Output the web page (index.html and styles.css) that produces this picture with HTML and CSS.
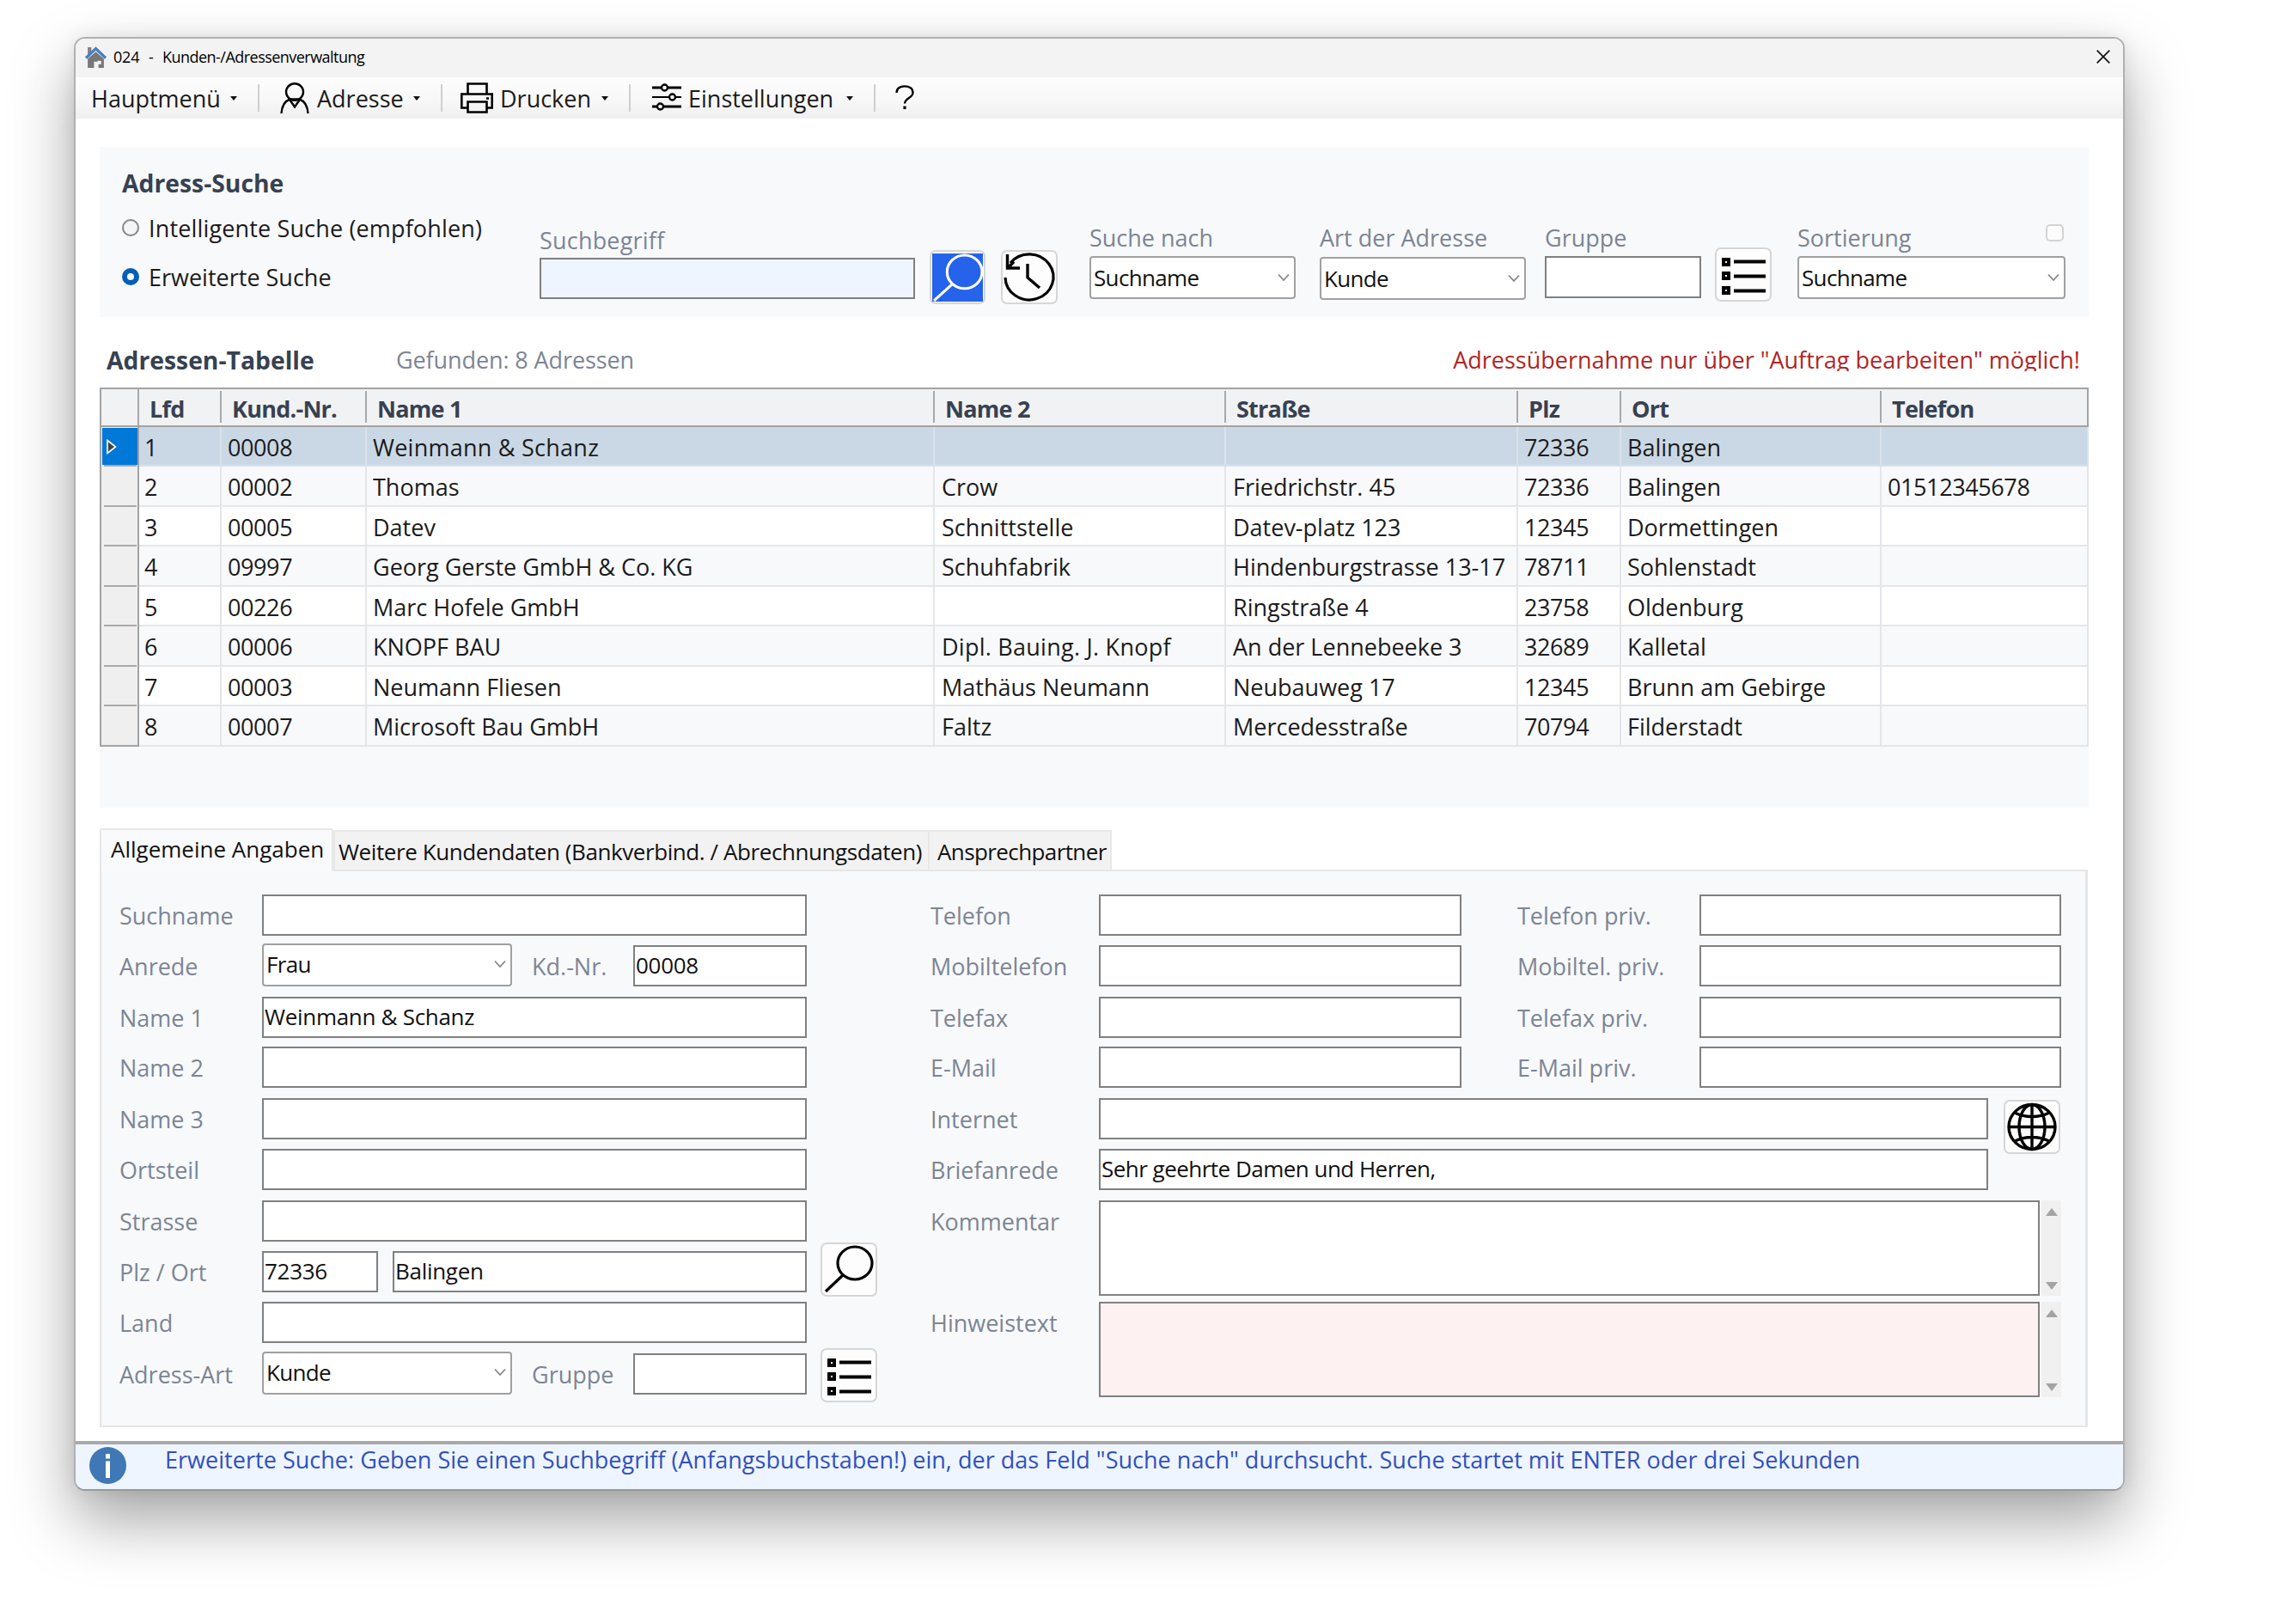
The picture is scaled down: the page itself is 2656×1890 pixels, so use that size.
FILE: index.html
```html
<!DOCTYPE html>
<html lang="de">
<head>
<meta charset="utf-8">
<title>Kunden-/Adressenverwaltung</title>
<link rel="stylesheet" href="styles.css">
</head>
<body>
<svg class="defs" width="0" height="0">
  <symbol id="i-list" viewBox="0 0 66 63">
    <g fill="none" stroke="#000" stroke-width="4"><path d="M10 14h6v6h-6zM10 30h6v6h-6zM10 47h6v6h-6z"/><path d="M22 16.500h37M22 33.500h37M22 50.500h37"/></g>
  </symbol>
  <symbol id="i-chev" viewBox="0 0 14 10"><path d="M1 1.500l6 6.500 6-6.500" fill="none" stroke="#858585" stroke-width="1.800"/></symbol>
</svg>
<div class="window">
  <header class="titlebar">
    <svg class="home" viewBox="0 0 24 24"><path d="M3 1h4v5l-4 4z" fill="#808080"/><path d="M12 6l9 8v10h-6v-7h-5v7H3V14z" fill="#777"/><path d="M14 16h4v4h-4z" fill="#f3f3f3"/><path d="M1 13L12 2.500 23 13" fill="none" stroke="#4581c2" stroke-width="3.200"/></svg>
    <span class="t-no">024</span><span class="t-dash">-</span><span class="t-name">Kunden-/Adressenverwaltung</span>
    <svg class="close" viewBox="0 0 16 16"><path d="M.7.700l14.600 14.600M15.300.700L.7 15.300" stroke="#111" stroke-width="1.700"/></svg>
  </header>
  <nav class="toolbar">
    <span class="m m1">Hauptmenü</span><i class="arr"></i><i class="sep"></i>
    <svg class="ic-user" viewBox="0 0 34 36" fill="none" stroke="#000" stroke-width="2.400"><ellipse cx="17" cy="11" rx="10" ry="9.800"/><path d="M1.500 36C2 27 6 21.500 11.500 19.500h11C28 21.500 32 27 32.500 36M11.500 20.500l5.500 8 5.500-8"/></svg>
    <span class="m m2">Adresse</span><i class="arr"></i><i class="sep"></i>
    <svg class="ic-print" viewBox="0 0 38 36" fill="none" stroke="#000" stroke-width="2.600"><path d="M8.500 13V1.500h22V13M8.500 29.500H1.300V13.500h35.400v16h-6.200"/><path d="M8.500 22.500h22v12h-22z"/><path d="M30 18.500h3"/></svg>
    <span class="m m3">Drucken</span><i class="arr"></i><i class="sep"></i>
    <svg class="ic-set" viewBox="0 0 34 32" fill="none" stroke="#000" stroke-width="3"><path d="M0 5h11M18 5h16M0 27h6M13 27h21"/><path d="M0 16h20M27 16h7" stroke-width="2.200"/><g stroke-width="2.300"><circle cx="14.500" cy="5" r="3.500"/><circle cx="23.500" cy="16" r="3.500"/><circle cx="9.500" cy="27" r="3.500"/></g></svg>
    <span class="m m4">Einstellungen</span><i class="arr"></i><i class="sep"></i>
    <svg class="ic-help" viewBox="0 0 22 28" fill="none" stroke="#000" stroke-width="2.300"><path d="M1.500 9C1.500 4 5.500 1.300 11 1.300S20.500 4 20.500 9c0 6-9.500 6-9.500 12.500"/><path d="M11 24.500v3.500" stroke-width="3.200"/></svg>
  </nav>

  <main>
    <section class="search">
      <div class="modes">
        <h2>Adress-Suche</h2>
        <label class="radio r1"><i></i><span class="w-int">Intelligente Suche (empfohlen)</span></label>
        <label class="radio r2 on"><i></i><span>Erweiterte Suche</span></label>
      </div>
      <div class="f f-term"><span class="lb">Suchbegriff</span><div class="in"></div></div>
      <div class="btn b-go"><svg viewBox="0 0 58 55"><path fill="#2563eb" d="M0 0h58v55H0z"/><g fill="none" stroke="#fff" stroke-width="3"><ellipse cx="37" cy="21" rx="20" ry="19"/><path d="M23 35L2 54"/></g></svg></div>
      <div class="btn b-hist"><svg viewBox="0 0 66 63" fill="none" stroke="#000" stroke-width="3.200"><path d="M5 32a28 26.500 0 1 0 6-17"/><path d="M7.500 5v16H22M8 21l7-7.500M31 16v16l14 12" stroke-width="3.400"/></svg></div>
      <div class="f f-by"><span class="lb">Suche nach</span><div class="sel">Suchname<svg><use href="#i-chev"/></svg></div></div>
      <div class="f f-kind"><span class="lb">Art der Adresse</span><div class="sel">Kunde<svg><use href="#i-chev"/></svg></div></div>
      <div class="f f-grp"><span class="lb">Gruppe</span><div class="in"></div></div>
      <div class="btn b-list"><svg><use href="#i-list"/></svg></div>
      <div class="f f-sort"><span class="lb">Sortierung<i class="chk"></i></span><div class="sel">Suchname<svg><use href="#i-chev"/></svg></div></div>
    </section>

    <div class="tabhead"><h2>Adressen-Tabelle</h2><span class="found">Gefunden: 8 Adressen</span><span class="warn">Adressübernahme nur über "Auftrag bearbeiten" möglich!</span></div>

    <section class="grid">
      <div class="hr"><b></b><b>Lfd</b><b>Kund.-Nr.</b><b>Name 1</b><b>Name 2</b><b>Straße</b><b>Plz</b><b>Ort</b><b>Telefon</b></div>
      <div class="rows">
      <div class="r cur"><i><svg viewBox="0 0 12 18"><path d="M1 1.500l9.500 7.500L1 16.500z" fill="#444" stroke="#fff" stroke-width="1.600"/></svg></i><span>1</span><span>00008</span><span class="wide-text">Weinmann &amp; Schanz</span><span></span><span></span><span>72336</span><span>Balingen</span><span></span></div>
      <div class="r"><i></i><span>2</span><span>00002</span><span>Thomas</span><span>Crow</span><span>Friedrichstr. 45</span><span>72336</span><span>Balingen</span><span>01512345678</span></div>
      <div class="r"><i></i><span>3</span><span>00005</span><span>Datev</span><span>Schnittstelle</span><span>Datev-platz 123</span><span>12345</span><span>Dormettingen</span><span></span></div>
      <div class="r"><i></i><span>4</span><span>09997</span><span>Georg Gerste GmbH &amp; Co. KG</span><span>Schuhfabrik</span><span>Hindenburgstrasse 13-17</span><span>78711</span><span>Sohlenstadt</span><span></span></div>
      <div class="r"><i></i><span>5</span><span>00226</span><span>Marc Hofele GmbH</span><span></span><span>Ringstraße 4</span><span>23758</span><span>Oldenburg</span><span></span></div>
      <div class="r"><i></i><span>6</span><span>00006</span><span>KNOPF BAU</span><span class="wide-text">Dipl. Bauing. J. Knopf</span><span>An der Lennebeeke 3</span><span>32689</span><span>Kalletal</span><span></span></div>
      <div class="r"><i></i><span>7</span><span>00003</span><span>Neumann Fliesen</span><span>Mathäus Neumann</span><span>Neubauweg 17</span><span>12345</span><span>Brunn am Gebirge</span><span></span></div>
      <div class="r"><i></i><span>8</span><span>00007</span><span>Microsoft Bau GmbH</span><span>Faltz</span><span>Mercedesstraße</span><span>70794</span><span>Filderstadt</span><span></span></div>
      </div>
    </section>

    <div class="tabs"><div class="tab t1">Allgemeine Angaben</div><div class="tab t2"><span>Weitere Kundendaten (Bankverbind. / Abrechnungsdaten)</span></div><div class="tab t3"><span>Ansprechpartner</span></div></div>
    <section class="form">
      <div class="lb a r-1">Suchname</div><div class="in b r-1"></div>
      <div class="lb a r-2">Anrede</div>
      <div class="multi b r-2"><div class="sel">Frau<svg><use href="#i-chev"/></svg></div><span class="lb">Kd.-Nr.</span><div class="in short">00008</div></div>
      <div class="lb a r-3">Name 1</div><div class="in b r-3">Weinmann &amp; Schanz</div>
      <div class="lb a r-4">Name 2</div><div class="in b r-4"></div>
      <div class="lb a r-5">Name 3</div><div class="in b r-5"></div>
      <div class="lb a r-6">Ortsteil</div><div class="in b r-6"></div>
      <div class="lb a r-7">Strasse</div><div class="in b r-7"></div>
      <div class="lb a r-8">Plz / Ort</div>
      <div class="multi b r-8"><div class="in zip">72336</div><div class="in city">Balingen</div></div>
      <div class="btn c r-8 up"><svg viewBox="0 0 66 63" fill="none" stroke="#000" stroke-width="3.200"><ellipse cx="40" cy="24" rx="20" ry="19"/><path d="M26 38L6 57"/></svg></div>
      <div class="lb a r-9">Land</div><div class="in b r-9"></div>
      <div class="lb a r-10">Adress-Art</div>
      <div class="multi b r-10"><div class="sel">Kunde<svg><use href="#i-chev"/></svg></div><span class="lb">Gruppe</span><div class="in short"></div></div>
      <div class="btn c r-10 up6"><svg><use href="#i-list"/></svg></div>

      <div class="lb d r-1">Telefon</div><div class="in e r-1"></div><div class="lb g r-1">Telefon priv.</div><div class="in h r-1"></div>
      <div class="lb d r-2">Mobiltelefon</div><div class="in e r-2"></div><div class="lb g r-2">Mobiltel. priv.</div><div class="in h r-2"></div>
      <div class="lb d r-3">Telefax</div><div class="in e r-3"></div><div class="lb g r-3">Telefax priv.</div><div class="in h r-3"></div>
      <div class="lb d r-4">E-Mail</div><div class="in e r-4"></div><div class="lb g r-4">E-Mail priv.</div><div class="in h r-4"></div>
      <div class="lb d r-5">Internet</div><div class="in wide r-5"></div>
      <div class="btn web r-5"><svg viewBox="0 0 66 63" fill="none" stroke="#000" stroke-width="3.400"><ellipse cx="33" cy="31.500" rx="27" ry="26"/><ellipse cx="33" cy="31.500" rx="15" ry="26"/><path d="M33 5v53M6 31.500h54M13 15c12 6 28 6 40 0M13 48c12-6 28-6 40 0"/></svg></div>
      <div class="lb d r-6">Briefanrede</div><div class="in wide greet r-6">Sehr geehrte Damen und Herren,</div>
      <div class="lb d r-7">Kommentar</div><div class="area r-7"><div class="in"></div><div class="sb"><i></i><i></i></div></div>
      <div class="lb d r-9">Hinweistext</div><div class="area hint r-9"><div class="in"></div><div class="sb"><i></i><i></i></div></div>
    </section>
  </main>

  <footer class="status">
    <svg viewBox="0 0 43 43"><circle cx="21.500" cy="21.500" r="21.500" fill="#3f78b4"/><path d="M21.500 8v5.500M21.500 16.500v19.500" stroke="#fff" stroke-width="5"/></svg>
    <span>Erweiterte Suche: Geben Sie einen Suchbegriff (Anfangsbuchstaben!) ein, der das Feld "Suche nach" durchsucht. Suche startet mit ENTER oder drei Sekunden</span>
  </footer>
</div>
</body>
</html>
```
FILE: styles.css
```css
* { box-sizing: border-box; }
html { background: #fff; }
body { margin: 0; min-height: 1890px; display: flow-root; font: 27px/48px "Open Sans", "Noto Sans", sans-serif; color: #1b1b1b; white-space: nowrap; }
.defs { display: block; height: 0; }
svg { display: block; flex: none; }
i { font-style: normal; }
h2 { margin: 0; font-size: 28.3px; font-weight: 700; color: #374151; }

.window { width: 2387px; height: 1692px; margin: 43px 0 0 86px; border: 2px solid #b0b0b0; border-bottom-color: #999; border-radius: 13px; background: #fff; overflow: hidden; display: flex; flex-direction: column;
  box-shadow: 0 34px 72px rgba(0,0,0,.36), 0 0 20px rgba(0,0,0,.08); }

.titlebar { height: 45px; background: #f3f3f3; display: flex; align-items: center; font-size: 18px; letter-spacing: -.53px; line-height: 42px; color: #000; padding: 0 15px 3px 11px; }
.home { width: 25px; height: 25px; margin-right: 8px; }
.t-no { width: 41px; letter-spacing: -.2px; }
.t-dash { width: 16px; }
.close { width: 16px; height: 16px; margin-left: auto; }

.toolbar { height: 48px; background: linear-gradient(#fdfdfd, #f7f7f7 60%, #efefef); display: flex; align-items: center; padding-left: 18px; flex: none; }
.arr { border: 4px solid transparent; border-top: 5px solid #111; border-bottom: 0; }
.sep { width: 2px; height: 32px; background: #cfcfcf; }
.m { padding-top: 1px; }
.m1 { width: 162px; } .m2 { width: 112px; } .m3 { width: 118px; } .m4 { width: 184px; }
.arr + .sep { margin-left: 24px; }
.ic-user { width: 34px; height: 36px; margin: 0 9px 0 24px; }
.ic-print { width: 38px; height: 36px; margin: 0 8px 0 21px; }
.ic-set { width: 34px; height: 32px; margin: -3px 8px 0 25px; }
.ic-help { width: 22px; height: 28px; margin: -2px 0 0 23px; }

main { padding: 33px 40px 0 28px; flex: 1; }
.lb { color: #7c8594; }
.in, .sel { height: 48px; border: 2px solid #808080; background: #fff; font-size: 26px; letter-spacing: -.3px; line-height: 42px; padding-left: 1px; color: #111; }
.sel { height: 50px; border-color: #a0a0a0; border-radius: 4px; padding: 0 5px 0 3px; line-height: 45px; letter-spacing: -.65px; display: flex; justify-content: space-between; align-items: center; }
.sel svg { width: 14px; height: 10px; }
.btn { width: 66px; height: 63px; border: 2px solid #d6d6d6; border-radius: 7px; background: #fdfdfd; display: flex; align-items: center; justify-content: center; }
.btn svg { width: 66px; height: 63px; margin: -2px; }

.search { height: 198px; background: #f8f9fb; display: flex; padding-left: 26px; align-items: flex-start; }
.modes { width: 486px; padding-top: 18px; }
.radio { display: flex; align-items: center; height: 48px; }
.radio i { width: 20px; height: 20px; border: 2px solid #858585; border-radius: 50%; margin: -2px 11px 0 0; background: #f5f5f5; }
.w-int { letter-spacing: .15px; }
.r1 { margin-top: 5px; }
.r2 { margin-top: 9px; }
.radio.on i { border: 6px solid #005fb8; background: #fff; }
.f { padding-top: 86px; }
.f .lb { display: flex; height: 41px; line-height: 39px; justify-content: space-between; }
.f-term { width: 437px; padding-top: 89px; }
.f-term .lb { height: 40px; letter-spacing: .2px; }
.f-term .in { background: #eef5ff; }
.b-go, .b-hist { margin-top: 120px; margin-left: 17px; }
.b-go { width: 65px; }
.b-go svg { width: 59px; height: 56px; margin: 0; }
.b-hist { margin-left: 18px; }
.f-by { width: 240px; margin-left: 37px; }
.f-kind { width: 240px; margin-left: 28px; }
.f-kind .lb { height: 42px; }
.f-grp { width: 182px; margin-left: 22px; }
.f-grp .in { height: 49px; }
.b-list { margin: 117px 30px 0 16px; }
.f-sort { width: 312px; }
.chk { width: 21px; height: 20px; border: 2px solid #d4d4d4; border-radius: 5px; background: #fcfcfc; margin: 4px 2px 0 0; }

.tabhead { height: 82px; padding: 26px 10px 0 8px; display: flex; }
.tabhead h2 { width: 337px; }
.found { color: #7c8594; letter-spacing: -.1px; }
.warn { margin-left: auto; color: #b02626; height: 37px; overflow: hidden; }

.grid { height: 489px; background: #f8f9fb; }
.hr, .r { display: grid; grid-template-columns: 46px 96px 169px 661px 339px 340px 120px 303px 241px; }
.hr { height: 46px; background: #f1f2f4; border: 2px solid #a3a3a3; color: #374151; line-height: 39px; letter-spacing: -.75px; }
.hr b { position: relative; left: -2px; padding: 3px 0 0 12px; background: linear-gradient(#a9a9a9, #a9a9a9) right 2px / 2px 37px no-repeat; }
.hr b:first-child { background-position: right 0; background-size: 2px 44px; }
.hr b:last-child { background: none; }
.r { height: 46px; background: #fff; }
.r:nth-child(even) { height: 47px; background: #f8f9fb; }
.r span { padding: 2px 0 0 7px; border-right: 2px solid #e4e6ea; border-bottom: 2px solid #e4e6ea; line-height: 44px; height: 100%; }
.r span:nth-child(2) { padding-left: 6px; }
.r span:nth-child(3), .r span:nth-child(7), .r span:nth-child(9) { letter-spacing: -.4px; }
.r span:nth-child(5), .r span:nth-child(6) { padding-left: 8px; }
.r .wide-text { letter-spacing: .25px; }
.r i { background: linear-gradient(#aaa, #aaa) 3px 100% / 38px 2px no-repeat #efefef; border: 0 solid #a3a3a3; border-width: 0 2px 0 2px; }
.r { grid-template-rows: 100%; }
.r:last-child i { border-bottom-width: 2px; background: #efefef; }
.r.cur { background: #cad8e5; }
.r.cur span { border-right-color: #d9e2ec; border-bottom-color: #d9e2ec; }
.r.cur i { background: linear-gradient(#aaa, #aaa) 3px 100% / 38px 2px no-repeat, linear-gradient(#0078d7, #0078d7) 1px 1px / 41px 43px no-repeat #efefef; padding: 14px 0 0 6px; }
.r.cur svg { width: 12px; height: 18px; }

.tabs { display: flex; align-items: flex-end; margin-top: 24px; height: 48px; }
.tab { border: 2px solid #e8e8e8; border-bottom: 0; background: #f2f2f2; height: 46px; line-height: 46px; color: #111; font-size: 26px; }
.tab.t1 { background: #f9fafb; height: 50px; width: 272px; padding-left: 11px; margin-bottom: -2px; position: relative; line-height: 44px; border-radius: 3px 3px 0 0; }
.t2 { width: 694px; padding-left: 4px; letter-spacing: -.42px; }
.t3 { width: 213px; padding-left: 9px; margin-left: -1px; border-left-width: 1px; letter-spacing: -.6px; }
.form { width: 2314px; height: 649px; border: 2px solid #e6e6e6; border-right-width: 3px; background: #f8f9fb; padding: 27px 0 0 21px; display: grid;
  grid-template-columns: 166px 634px 16px 66px 62px 196px 422px 65px 212px 336px 18px 66px 1px;
  grid-template-rows: 59px 60px 58px 60px 59px 60px 59px 59px 60px 50px; align-items: start; }
.form .lb { line-height: 49px; }
.a { grid-column: 1; } .b { grid-column: 2; } .c { grid-column: 4; }
.d { grid-column: 6; } .e { grid-column: 7; } .g { grid-column: 9; } .h { grid-column: 10 / 14; }
.wide { grid-column: 7 / 11; }
.web { grid-column: 12; margin-top: 2px; }
.area { grid-column: 7 / 14; display: flex; gap: 2px; }
.area .in { width: 1095px; height: 111px; }
.hint .in { background: #fef1f1; }
.in.greet { letter-spacing: -.52px; }
.r-1 { grid-row: 1; } .r-2 { grid-row: 2; } .r-3 { grid-row: 3; } .r-4 { grid-row: 4; } .r-5 { grid-row: 5; }
.r-6 { grid-row: 6; } .r-7 { grid-row: 7; } .r-8 { grid-row: 8; } .r-9 { grid-row: 9; } .r-10 { grid-row: 10; }
.multi { display: flex; align-items: flex-start; height: 48px; }
.multi .sel { width: 291px; margin: -2px 23px 0 0; line-height: 43px; padding-bottom: 2px; }
.multi .lb { width: 118px; }
.short { width: 202px; }
.zip { width: 135px; margin-right: 17px; }
.city { width: 482px; }
.up { margin-top: -10px; }
.up6 { margin-top: -6px; }
.sb { width: 23px; height: 111px; background: #f0f0f0; display: flex; flex-direction: column; justify-content: space-between; align-items: center; padding: 9px 0 7px; }
.sb i { border: 7px solid transparent; border-bottom: 9px solid #a3a3a3; border-top: 0; }
.sb i + i { border-bottom: 0; border-top: 9px solid #a3a3a3; }

.status { height: 56px; flex: none; border-top: 4px solid #a9a9a9; background: #eef5ff; display: flex; padding-left: 16px; color: #3150c0; }
.status svg { width: 43px; height: 43px; margin: 3px 45px 0 0; }
.status span { line-height: 36px; letter-spacing: .03px; }
```
